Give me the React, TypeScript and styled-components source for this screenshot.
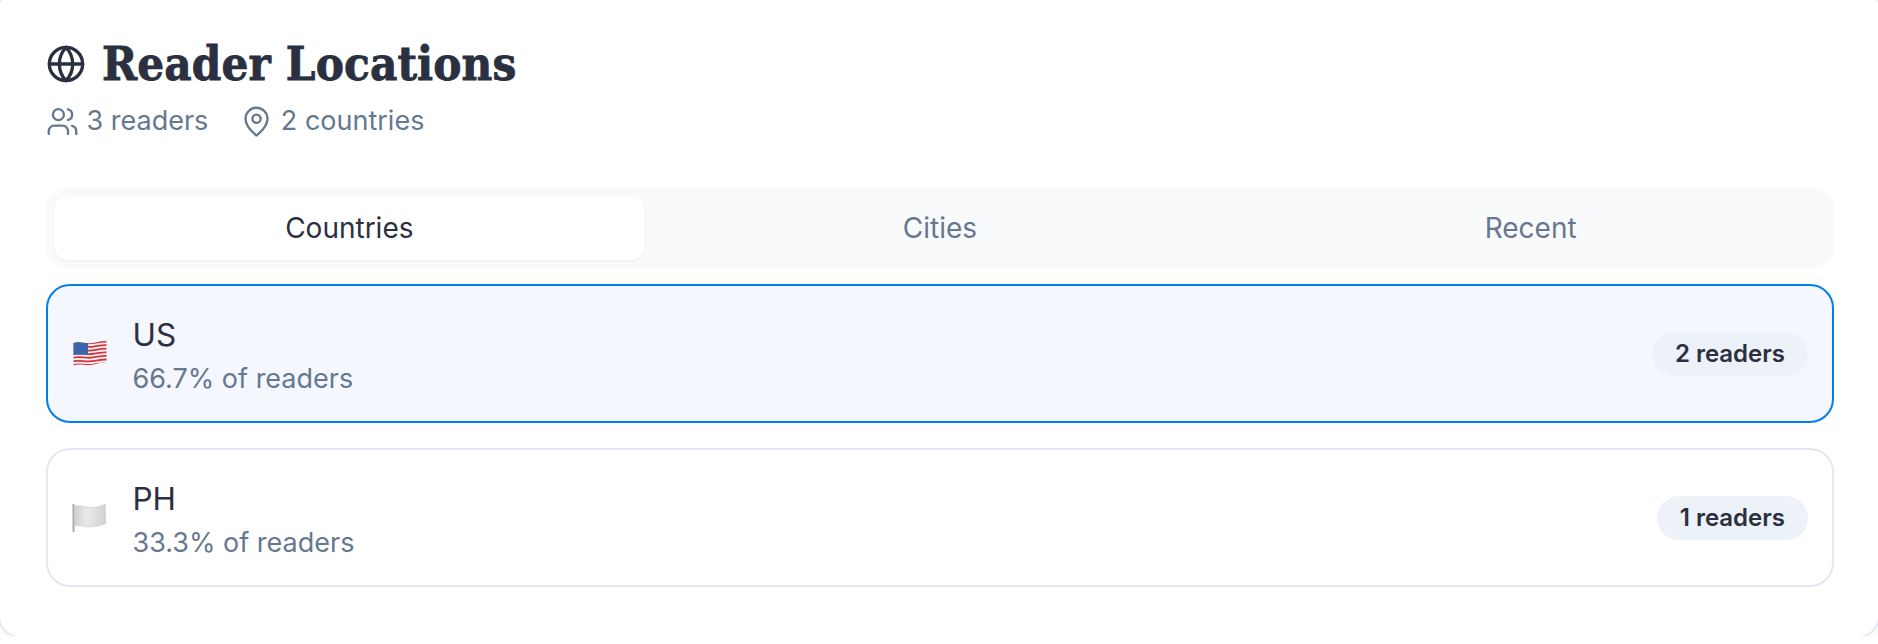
import styled, { createGlobalStyle } from "styled-components";
import { Globe, MapPin, Users } from "lucide-react";

const countries = [
    { code: "US", share: "66.7% of readers", readers: "2 readers", selected: true },
    { code: "PH", share: "33.3% of readers", readers: "1 readers", selected: false },
];

const tabs = ["Countries", "Cities", "Recent"];

const UsFlag = () => (
    <svg width="35" height="28" viewBox="0 0 35 28">
        <defs>
            <clipPath id="us-wave">
                <path d="M1.5 3C8 1 12 4 20 3C26 2.3 30 0.3 34.5 1.1V22.5C30 21.5 26 24 19 25C12 25.8 7 23 1.5 25.5Z" />
            </clipPath>
        </defs>
        <g clipPath="url(#us-wave)">
            <rect width="35" height="28" fill="#f6f3f4" />
            {[2, 5.6, 9.2, 12.8, 16.4, 20, 23.6].map((y) => (
                <path
                    key={y}
                    d={`M0 ${y + 1.5}C8 ${y - 0.5} 12 ${y + 2} 20 ${y + 1.2}C26 ${y + 0.5} 30 ${y - 1} 35 ${y - 0.4}`}
                    fill="none"
                    stroke="#d5343f"
                    strokeWidth="1.8"
                />
            ))}
            <rect x="0" y="1" width="16" height="13.6" fill="#3a64ab" />
        </g>
    </svg>
);

const PlainFlag = () => (
    <svg width="35" height="30" viewBox="0 0 35 30">
        <defs>
            <linearGradient id="white-flag" x1="0" x2="1" y1="0" y2="0">
                <stop offset="0" stopColor="#cfcfcf" />
                <stop offset="0.4" stopColor="#e9e9e9" />
                <stop offset="1" stopColor="#d2d2d2" />
            </linearGradient>
        </defs>
        <rect x="0.5" y="1" width="2" height="28" fill="#a7abad" />
        <path
            d="M2.5 3C9 1.5 14 5 21 4.5C27 4 30 2 33.5 1V21C30 21.5 26 23.5 20 24C13 24.5 8 21.5 2.5 23Z"
            fill="url(#white-flag)"
            stroke="#c6c6c6"
            strokeWidth="0.5"
        />
    </svg>
);

const App = () => {
    return (
        <Card>
            <GlobalStyle />
            <Heading>
                <Globe size={40} strokeWidth={2} />
                <h1>Reader Locations</h1>
            </Heading>
            <Meta>
                <MetaItem>
                    <Users size={33} strokeWidth={1.7} />
                    3 readers
                </MetaItem>
                <MetaItem>
                    <MapPin size={33} strokeWidth={1.7} />
                    2 countries
                </MetaItem>
            </Meta>
            <Tabs>
                {tabs.map((tab, index) => (
                    <Tab key={tab} $active={index === 0}>
                        {tab}
                    </Tab>
                ))}
            </Tabs>
            <List>
                {countries.map((country) => (
                    <Row key={country.code} $selected={country.selected}>
                        <Flag>{country.code === "US" ? <UsFlag /> : <PlainFlag />}</Flag>
                        <Details>
                            <Code>{country.code}</Code>
                            <Share>{country.share}</Share>
                        </Details>
                        <Badge>{country.readers}</Badge>
                    </Row>
                ))}
            </List>
        </Card>
    );
};

export default App;

const GlobalStyle = createGlobalStyle`
    html, body {
        margin: 0;
        background: #fff;
    }

    body {
        font-family: Inter, "Noto Sans", sans-serif;
    }
`;

const Card = styled.div`
    box-sizing: border-box;
    width: 1878px;
    height: 636px;
    padding: 38px 44px 0 46px;

    background: #fff;
    border-radius: 4px 4px 20px 20px;
    box-shadow: 0 0 0 2px #e6eaf4, 0 4px 5px rgba(45, 55, 72, 0.05);
`;

const Heading = styled.div`
    display: flex;
    align-items: center;
    gap: 16px;
    height: 52px;
    color: #2b3040;

    h1 {
        margin: 0;
        font-family: "DejaVu Serif", serif;
        font-stretch: condensed;
        font-size: 47px;
        font-weight: 700;
        line-height: 52px;
        letter-spacing: 0.13px;
        -webkit-text-stroke: 0.8px #2b3040;
    }
`;

const Meta = styled.div`
    display: flex;
    gap: 32px;
    margin-top: 13px;
    color: #667790;
    font-size: 27px;
    line-height: 36px;
`;

const MetaItem = styled.div`
    display: flex;
    align-items: center;
    gap: 7.5px;
`;

const Tabs = styled.div`
    display: grid;
    grid-template-columns: repeat(3, 1fr);
    height: 80px;
    margin-top: 49px;
    padding: 8px;
    box-sizing: border-box;

    background: #f9fafc;
    border-radius: 19px;
`;

const Tab = styled.div<{ $active: boolean }>`
    display: flex;
    align-items: center;
    justify-content: center;

    color: ${(p) => (p.$active ? "#2b3040" : "#667790")};
    background: ${(p) => (p.$active ? "#fff" : "transparent")};
    border-radius: 14px;
    box-shadow: ${(p) => (p.$active ? "0 1px 3px rgba(45, 55, 72, 0.08)" : "none")};
    font-size: 28px;
    font-weight: 400;
`;

const List = styled.div`
    display: flex;
    flex-direction: column;
    gap: 25px;
    margin-top: 16px;
`;

const Row = styled.div<{ $selected: boolean }>`
    box-sizing: border-box;
    display: flex;
    align-items: center;
    height: 139px;
    padding: 0 24px;

    background: ${(p) => (p.$selected ? "#f4f8fe" : "#fff")};
    border: 2px solid ${(p) => (p.$selected ? "#007fec" : "#e2e7f2")};
    border-radius: 24px;
`;

const Flag = styled.div`
    display: flex;
    flex: none;
    width: 60.5px;
`;

const Details = styled.div`
    flex: 1;
    padding-top: 2px;
`;

const Code = styled.div`
    color: #2b3040;
    font-size: 31.5px;
    font-weight: 400;
    line-height: 44px;
`;

const Share = styled.div`
    margin-top: 4px;
    color: #667790;
    font-size: 27px;
    line-height: 36px;
`;

const Badge = styled.div`
    padding: 0 23px;
    height: 44px;

    color: #2b3040;
    background: #edf1f8;
    border-radius: 22px;
    font-size: 24px;
    font-weight: 600;
    line-height: 44px;
`;
